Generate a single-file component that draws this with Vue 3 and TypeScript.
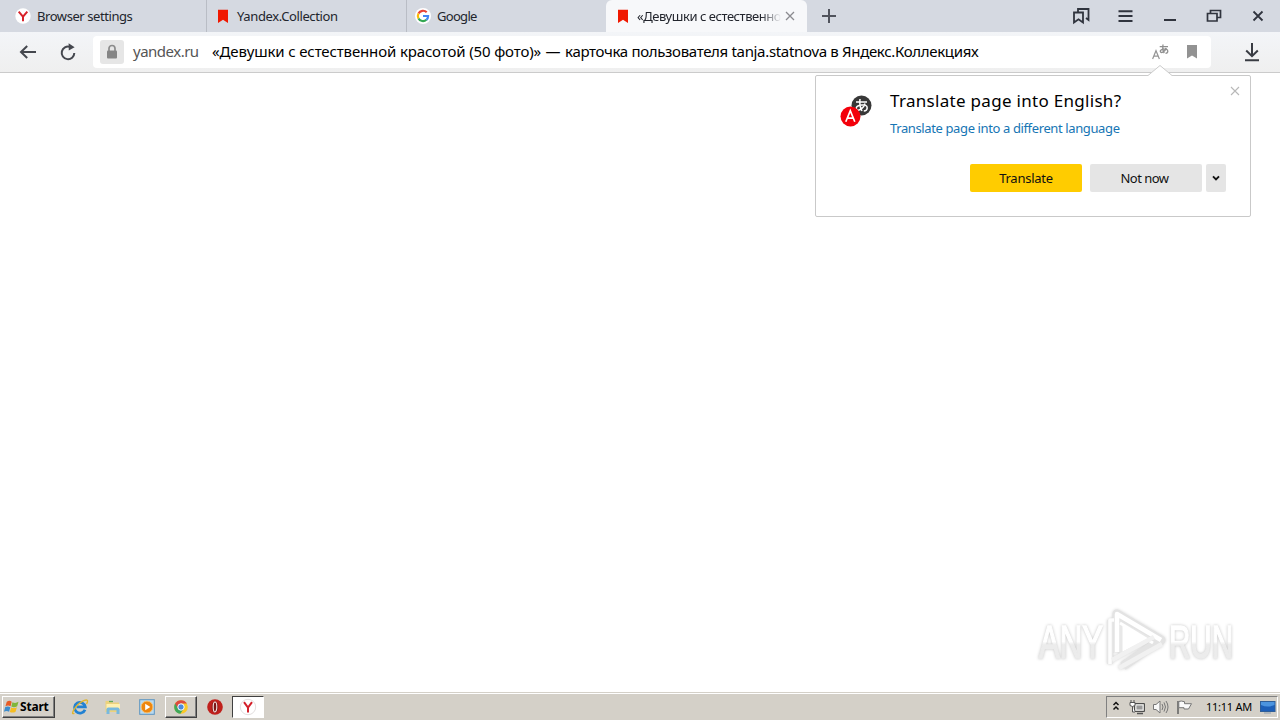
<script setup lang="ts">
interface Tab {
  id: string
  title: string
  icon: 'yandex' | 'bookmark' | 'google'
  active: boolean
}

const tabs: Tab[] = [
  { id: 't1', title: 'Browser settings', icon: 'yandex', active: false },
  { id: 't2', title: 'Yandex.Collection', icon: 'bookmark', active: false },
  { id: 't3', title: 'Google', icon: 'google', active: false },
  { id: 't4', title: '«Девушки с естественно', icon: 'bookmark', active: true },
]
</script>

<template>
  <div class="screen">
    <header class="tabbar">
      <div v-for="tab in tabs" :key="tab.id" :class="['tab', tab.id, { active: tab.active }]">
        <svg v-if="tab.icon === 'yandex'" class="fav" viewBox="0 0 16 16">
          <circle cx="8" cy="8" r="7.7" fill="#fff" />
          <path d="M3.7 3.6 8 8.7 12.3 3.6M8 8.3V13.3" fill="none" stroke="#d8232b" stroke-width="2" />
        </svg>
        <svg v-else-if="tab.icon === 'bookmark'" class="fav" viewBox="0 0 16 16">
          <path d="M3 1.7H13V15L8 11.8 3 15Z" fill="#f01800" />
        </svg>
        <svg v-else class="fav" viewBox="0 0 16 16">
          <circle cx="8" cy="8" r="8" fill="#fff" />
          <g fill="none" stroke-width="2.2">
            <path d="M11.7 4.3A5.1 5.1 0 0 0 3.5 5.6" stroke="#ea4335" />
            <path d="M3.5 5.6A5.1 5.1 0 0 0 3.5 10.4" stroke="#fbbc05" />
            <path d="M3.5 10.4A5.1 5.1 0 0 0 11.4 11.8" stroke="#34a853" />
            <path d="M11.4 11.8A5 5 0 0 0 13.1 8H8" stroke="#4285f4" />
          </g>
        </svg>
        <span class="title">{{ tab.title }}</span>
        <svg v-if="tab.active" class="tabclose" viewBox="0 0 10 10">
          <path d="M1 1 9 9M9 1 1 9" fill="none" stroke="#8b8b90" stroke-width="1.3" />
        </svg>
      </div>
      <svg class="plus" viewBox="0 0 14 14"><path d="M7 0V14M0 7H14" fill="none" stroke="#50535c" stroke-width="2" /></svg>
      <div class="winbtns">
        <svg viewBox="0 0 18 18">
          <path d="M6 6V2H16.5V13L14 11M2 5.5H11V15.5L6.5 12.3 2 15.5Z" fill="none" stroke="#30343e" stroke-width="1.8" />
        </svg>
        <svg viewBox="0 0 18 18"><path d="M2.5 4.2H16.5M2.5 9.1H16.5M2.5 14H16.5" stroke="#30343e" stroke-width="2" /></svg>
        <svg viewBox="0 0 18 18"><path d="M3 13H15" stroke="#30343e" stroke-width="2" /></svg>
        <svg viewBox="0 0 18 18">
          <path d="M5.5 6V3.5H15.5V10.5H12.5M2.5 6.5H12V14H2.5Z" fill="none" stroke="#30343e" stroke-width="1.7" />
        </svg>
        <svg viewBox="0 0 18 18"><path d="M4.5 4.5 13.5 13.5M13.5 4.5 4.5 13.5" stroke="#30343e" stroke-width="1.8" /></svg>
      </div>
    </header>

    <nav class="toolbar">
      <svg class="back" viewBox="0 0 18 16">
        <path d="M17 8H2M8.2 2 2 8 8.2 14" fill="none" stroke="#44474e" stroke-width="2" />
      </svg>
      <svg class="reload" viewBox="0 0 16 18">
        <path d="M10 3.9A6.3 6.3 0 1 0 14.3 10" fill="none" stroke="#44474e" stroke-width="2" />
        <path d="M8.6 .2 14.6 4.2 8.8 7.6Z" fill="#44474e" />
      </svg>
      <div class="omnibox">
        <div class="lock">
          <svg viewBox="0 0 12 16">
            <path d="M3 8V4.5A3 3 0 0 1 9 4.5V8" fill="none" stroke="#8b8b8b" stroke-width="1.7" />
            <rect x="1" y="6.5" width="10" height="8" rx="1" fill="#858585" />
          </svg>
        </div>
        <span class="host">yandex.ru</span>
        <span class="address"><span class="quoted">«Девушки с естественной красотой (50 фото)»</span><span class="dash"> — </span><span class="rest">карточка пользователя tanja.statnova в Яндекс.Коллекциях</span></span>
        <svg class="lang" viewBox="0 0 17 16">
          <path d="M.6 15 4 6.7 7.4 15M1.8 12.2H6.2" fill="none" stroke="#969696" stroke-width="1.2" />
          <path d="M7.7 2.6H16M11 .5C10.5 4 10.8 7 12.3 9M14.2 4C13 8 8.5 10 8.3 7.2 8.2 5 15.8 3.7 15.8 7.2 15.8 8.6 14.6 9.2 13.5 9.3" fill="none" stroke="#8f8f8f" stroke-width="1.3" />
        </svg>
        <svg class="mark" viewBox="0 0 10 14"><path d="M0 0H10V13.5L5 10.5 0 13.5Z" fill="#929292" /></svg>
      </div>
      <svg class="download" viewBox="0 0 16 20">
        <path d="M8 1V14M2.2 8.5 8 14.2 13.8 8.5M1 18.2H15" fill="none" stroke="#393c43" stroke-width="2" />
      </svg>
    </nav>

    <main class="page">
      <section class="popup">
        <svg class="pointer" viewBox="0 0 28 12">
          <path d="M0 12V10.5H2L14 0 26 10.5H28V12Z" fill="#fff" />
          <path d="M0 10.5H2L14 .5 26 10.5H28" fill="none" stroke="#cbcbcb" />
        </svg>
        <svg class="badge" viewBox="0 0 32 32">
          <circle cx="21.5" cy="10.5" r="10" fill="#383838" />
          <path d="M16 7H27M20 4C19.3 9 20 12.5 22 16M25 8.5C23.5 14 16.5 17.5 16.3 13.2 16.2 10 27.5 7.8 27.2 13 27.1 15 25.5 16 23.8 16" fill="none" stroke="#fff" stroke-width="1.5" />
          <circle cx="10.5" cy="21.5" r="10" fill="#f3000b" />
          <path d="M5.8 26.7 10.3 15.8 14.8 26.7M7.3 23.2H13.4" fill="none" stroke="#fff" stroke-width="1.7" />
        </svg>
        <div class="content">
          <h1>Translate page into English?</h1>
          <a>Translate page into a different language</a>
          <div class="actions">
            <button class="yes">Translate</button>
            <button class="no">Not now</button>
            <button class="more">
              <svg viewBox="0 0 8 6"><path d="M1 1.3 4 4.3 7 1.3" fill="none" stroke="#111" stroke-width="1.9" /></svg>
            </button>
          </div>
        </div>
        <svg class="popclose" viewBox="0 0 10 10"><path d="M1 1 9 9M9 1 1 9" stroke="#b8b8b8" stroke-width="1.1" /></svg>
      </section>

      <svg class="watermark" viewBox="0 0 200 70">
        <defs>
          <linearGradient id="fade" x1="0" y1="0" x2="0" y2="1">
            <stop offset=".5" stop-color="#fff" />
            <stop offset=".56" stop-color="#ececec" />
          </linearGradient>
        </defs>
        <g class="letters" fill="url(#fade)">
          <text x="4" y="52" textLength="64" lengthAdjust="spacingAndGlyphs">ANY</text>
          <text x="134" y="52" textLength="64" lengthAdjust="spacingAndGlyphs">RUN</text>
        </g>
        <g class="logo" fill="none" stroke-linejoin="round">
          <path d="M82 46V8L126 34 88 60" stroke="#e3e3e3" stroke-width="9" />
          <path d="M75 14V58" stroke="#e6e6e6" stroke-width="6" />
          <path d="M86 17V48L115 33Z" fill="#fff" stroke="#e8e8e8" stroke-width="3" />
          <path d="M82 46V8L126 34" stroke="#fff" stroke-width="4.5" />
          <path d="M85 17 118 37" stroke="#fff" stroke-width="3" />
          <path d="M75 58V14H79" stroke="#fdfdfd" stroke-width="3.5" />
          <path d="M77 54 119 31M84 62 127 38" stroke="#f1f1f1" stroke-width="4.5" />
        </g>
      </svg>
    </main>

    <footer class="taskbar">
      <button class="start">
        <svg viewBox="0 0 18 16">
          <path d="M4 2.5Q7 .5 9.2 2.5L8 7.3Q5.5 5.7 2.6 7.2Z" fill="#e75b24" />
          <path d="M10 2.9Q13 4.6 16.4 2.5L15 7.3Q12 9 8.8 7.6Z" fill="#80b63a" />
          <path d="M2.4 8Q5.2 6.6 7.8 8.2L6.4 13Q4 11.5 1 12.9Z" fill="#3c8ccc" />
          <path d="M8.6 8.5Q11.8 10 14.7 8.2L13.3 13Q10.5 14.7 7.2 13.3Z" fill="#f5bd22" />
        </svg>
        <span>Start</span>
      </button>
      <div class="launch">
        <span class="task">
          <svg viewBox="0 0 18 18">
            <path d="M14 11.7A5.4 5.4 0 1 1 14.3 8.9H5.5" fill="none" stroke="#2382d2" stroke-width="2.8" />
            <path d="M3.4 15.3C-1.8 17.8 4.8 6.4 12.7 2.7 17.8.5 16.8 4 15.5 6" fill="none" stroke="#e1b62f" stroke-width="1.4" />
          </svg>
        </span>
        <span class="task">
          <svg viewBox="0 0 18 18">
            <path d="M1.5 3H7L8 4.5H15V14H1.5Z" fill="#ecd27c" />
            <path d="M2.5 6H16V11H2.5Z" fill="#fff0b0" />
            <path d="M2.5 16V11.2Q2.5 9.5 4.3 9.5H13.7Q15.5 9.5 15.5 11.2V16H12.5V12.2H5.5V16Z" fill="#78b9de" />
            <path d="M5 3.5H9" stroke="#63a958" stroke-width="1.3" />
          </svg>
        </span>
        <span class="task">
          <svg viewBox="0 0 18 18">
            <rect x="1.7" y="1.7" width="14.6" height="14.6" fill="#b9daf0" stroke="#5c94c0" />
            <circle cx="9" cy="9" r="5.9" fill="#ee860e" stroke="#f8c06d" />
            <path d="M7.2 5.7 12.3 9 7.2 12.3Z" fill="#fff" />
          </svg>
        </span>
        <span class="task raised">
          <svg viewBox="0 0 18 18">
            <circle cx="9" cy="9" r="6.8" fill="#fbc927" />
            <path d="M9 9 3.1 5.6A6.8 6.8 0 0 0 8.4 15.8L11.8 10.5Z" fill="#3fa85a" />
            <path d="M3.1 5.6A6.8 6.8 0 0 1 14.9 5.6H9L6.1 10.6Z" fill="#dd4a3e" />
            <circle cx="9" cy="9" r="3.2" fill="#4c8adc" stroke="#fff" />
          </svg>
        </span>
        <span class="task">
          <svg viewBox="0 0 18 18">
            <circle cx="9" cy="9" r="7.8" fill="#c0201c" />
            <ellipse cx="9" cy="9" rx="3" ry="5.6" fill="#7b1514" stroke="#8f1a17" stroke-width=".8" />
            <ellipse cx="9" cy="9" rx="1.8" ry="5" fill="none" stroke="#f7e6e4" stroke-width="1.1" />
          </svg>
        </span>
        <span class="task pressed">
          <svg viewBox="0 0 18 18">
            <circle cx="9" cy="9" r="7.7" fill="#fff" stroke="#e2dede" />
            <path d="M5 4.2 9 9.6 13 4.2M9 9V14.5" fill="none" stroke="#d3202a" stroke-width="2" />
          </svg>
        </span>
      </div>
      <div class="tray">
        <svg class="chev" viewBox="0 0 8 10"><path d="M1.5 4 4 1.5 6.5 4M1.5 8.5 4 6 6.5 8.5" fill="none" stroke="#111" stroke-width="1.5" /></svg>
        <svg class="net" viewBox="0 0 17 16">
          <path d="M5.5 4.5H15.5V12.5H5.5Z" fill="#bdbdb8" stroke="#4e4e4e" />
          <path d="M7 6H14V11H7Z" fill="#999" stroke="#eee" />
          <path d="M8 14.5H14" stroke="#555" stroke-width="1.5" />
          <path d="M1 3.5H6V6.5Q3.5 8.5 1 6.5ZM2 1V3.5M5 1V3.5M3.5 7.5V13H6" fill="#fff" stroke="#555" />
        </svg>
        <svg class="vol" viewBox="0 0 17 16">
          <path d="M1.5 5.5H4L8 2V14L4 10.5H1.5Z" fill="#f8f8f8" stroke="#777" />
          <path d="M10 5Q12 8 10 11M12 3.4Q15 8 12 12.6M14 2Q18 8 14 14" fill="none" stroke="#777" />
        </svg>
        <svg class="flag" viewBox="0 0 17 16">
          <path d="M2 2V15" stroke="#666" stroke-width="1.6" />
          <path d="M2.8 2.5Q5 1.5 8.5 2.7V4.7H15.5L12.5 10H8V8.7H2.8Z" fill="#fafafa" stroke="#777" />
        </svg>
        <span class="clock">11:11 AM</span>
        <svg class="desk" viewBox="0 0 16 14">
          <rect x=".5" y="1.5" width="14.5" height="10" fill="#1d5fb8" stroke="#2f5e98" />
          <path d="M1 2H14.5V5Q8 8 1 5Z" fill="#4c94df" />
          <path d="M4 13H11" stroke="#8b9caf" />
        </svg>
      </div>
    </footer>
  </div>
</template>

<style>
html,
body {
  margin: 0;
  overflow: hidden;
}
</style>

<style scoped>
* {
  box-sizing: border-box;
}
svg {
  display: block;
  flex: none;
  overflow: visible;
}
.screen {
  width: 1280px;
  height: 720px;
  display: flex;
  flex-direction: column;
  background: #fff;
  color: #000;
  font-family: "Noto Sans", "Open Sans", sans-serif;
  overflow: hidden;
}
.tabbar {
  height: 32px;
  flex: none;
  display: flex;
  background: #d5d9e1;
}
.tab {
  width: 200px;
  height: 32px;
  padding-left: 8px;
  display: flex;
  align-items: center;
  border-left: 1px solid #b9bdc5;
  color: #22252d;
  font-size: 13px;
  white-space: nowrap;
}
.t1 {
  width: 206px;
  padding-left: 15px;
  border-left: 0;
}
.fav {
  width: 16px;
  height: 16px;
  margin-right: 6px;
}
.title {
  line-height: 20px;
}
.t1 .title {
  letter-spacing: -0.43px;
}
.t2 .title {
  letter-spacing: -0.38px;
}
.t3 .title {
  letter-spacing: -0.7px;
}
.active {
  width: 201px;
  padding-left: 9px;
  border-left: 0;
  border-radius: 6px 6px 0 0;
  background: #f7f8fa;
}
.active .title {
  width: 144px;
  letter-spacing: -0.46px;
  -webkit-mask-image: linear-gradient(90deg, #000 86%, transparent);
  mask-image: linear-gradient(90deg, #000 86%, transparent);
}
.tabclose {
  width: 10px;
  height: 10px;
  margin-left: 4px;
}
.plus {
  width: 14px;
  height: 14px;
  margin: 9px 0 0 15px;
}
.winbtns {
  display: flex;
  align-items: center;
  gap: 26.2px;
  margin-left: auto;
  margin-right: 13px;
}
.winbtns svg {
  width: 18px;
  height: 18px;
}
.toolbar {
  height: 41px;
  flex: none;
  display: flex;
  padding-left: 19px;
  border-bottom: 1px solid #cbcbcb;
  background: linear-gradient(#f3f5f8, #efefef);
}
.back {
  width: 18px;
  height: 16px;
  margin-top: 12px;
}
.reload {
  width: 16px;
  height: 18px;
  margin: 11px 0 0 23px;
}
.omnibox {
  width: 1118px;
  height: 32px;
  margin: 4px 0 0 17px;
  padding-left: 7px;
  display: flex;
  align-items: center;
  border-radius: 4px;
  background: #fff;
  font-size: 15px;
  line-height: 20px;
  white-space: nowrap;
}
.lock {
  width: 24px;
  height: 24px;
  display: flex;
  align-items: center;
  justify-content: center;
  border-radius: 3px;
  background: #e6e6e6;
}
.lock svg {
  width: 12px;
  height: 16px;
}
.host {
  width: 79px;
  margin: -2px 0 0 9px;
  color: #555;
  letter-spacing: -0.5px;
}
.address {
  width: 940px;
  margin-top: -2px;
  white-space: pre;
}
.quoted {
  letter-spacing: -0.13px;
}
.dash {
  letter-spacing: 0.4px;
}
.rest {
  letter-spacing: -0.33px;
}
.lang {
  width: 17px;
  height: 16px;
}
.mark {
  width: 10px;
  height: 14px;
  margin-left: 18px;
}
.download {
  width: 16px;
  height: 20px;
  margin: 10px 0 0 33px;
}
.page {
  position: relative;
  height: 619px;
  flex: none;
}
.popup {
  position: absolute;
  left: 815px;
  top: 2px;
  width: 436px;
  height: 142px;
  display: flex;
  border: 1px solid #c9c9c9;
  border-radius: 2px;
  background: #fff;
}
.pointer {
  position: absolute;
  left: 330px;
  top: -11px;
  width: 28px;
  height: 12px;
}
.badge {
  width: 32px;
  height: 32px;
  margin: 19px 0 0 24px;
}
.content {
  width: 336px;
  margin-left: 18px;
}
.content h1 {
  height: 24px;
  margin: 13px 0 0;
  font-size: 17px;
  font-weight: 400;
  letter-spacing: 0.3px;
  line-height: 24px;
  white-space: nowrap;
}
.content a {
  display: block;
  height: 20px;
  margin-top: 5px;
  color: #1675b4;
  font-size: 13px;
  letter-spacing: -0.38px;
  line-height: 20px;
  white-space: nowrap;
}
.actions {
  display: flex;
  margin: 26px 0 0 80px;
}
.actions button {
  width: 112px;
  height: 28px;
  padding: 0;
  border: 0;
  border-radius: 2px;
  background: #e5e5e5;
  color: #111;
  font: 13px "Noto Sans", sans-serif;
}
.actions .yes {
  background: #fc0;
  letter-spacing: -0.25px;
}
.actions .no {
  margin-left: 8px;
  padding-right: 3px;
  letter-spacing: -0.5px;
}
.actions .more {
  width: 20px;
  margin-left: 4px;
  display: flex;
  align-items: center;
  justify-content: center;
}
.more svg {
  width: 8px;
  height: 6px;
}
.popclose {
  position: absolute;
  right: 10px;
  top: 10px;
  width: 10px;
  height: 10px;
}
.watermark {
  position: absolute;
  left: 1035px;
  top: 533px;
  width: 200px;
  height: 70px;
}
.letters {
  font: 400 47px "Liberation Sans", sans-serif;
  stroke: url(#fade);
  stroke-width: 1.6px;
  filter: drop-shadow(0 0 1.5px #c4c4c4);
}
.logo {
  filter: drop-shadow(0 0 1.5px #d0d0d0);
}
.taskbar {
  height: 28px;
  flex: none;
  display: flex;
  align-items: center;
  padding: 2px 2px 2px;
  border-top: 1px solid #d4d0c8;
  background: #d4d0c8;
  box-shadow: inset 0 1px #fff;
}
.start {
  width: 53px;
  height: 22px;
  padding: 0 0 0 1px;
  display: flex;
  align-items: center;
  border: 1px solid;
  border-color: #fff #404040 #404040 #fff;
  box-shadow: inset -1px -1px #808080;
  background: #d4d0c8;
  color: #000;
  font: 700 12px "Noto Sans", sans-serif;
  letter-spacing: -0.2px;
}
.start svg {
  width: 17px;
  height: 16px;
  margin-left: -1px;
}
.launch {
  display: flex;
  margin-left: 8.5px;
  gap: 1.8px;
}
.task {
  width: 32px;
  height: 22px;
  display: flex;
  align-items: center;
  justify-content: center;
  border: 1px solid transparent;
}
.task svg {
  width: 18px;
  height: 18px;
}
.raised {
  border-color: #fff #404040 #404040 #fff;
  box-shadow: inset -1px -1px #808080;
}
.pressed {
  border-color: #404040 #fff #fff #404040;
  background: #fff;
}
.tray {
  width: 172px;
  height: 22px;
  margin-left: auto;
  padding-left: 5px;
  display: flex;
  align-items: center;
  border: 1px solid;
  border-color: #808080 #fff #fff #808080;
}
.chev {
  width: 8px;
  height: 10px;
  margin-bottom: 1px;
}
.net {
  width: 17px;
  height: 16px;
  margin-left: 9px;
}
.vol {
  width: 17px;
  height: 16px;
  margin-left: 6px;
}
.flag {
  width: 17px;
  height: 16px;
  margin-left: 7px;
}
.clock {
  width: 47px;
  margin-left: 13px;
  font-size: 11px;
  letter-spacing: -0.25px;
  white-space: nowrap;
}
.desk {
  width: 16px;
  height: 14px;
  margin-left: 7px;
}
</style>
